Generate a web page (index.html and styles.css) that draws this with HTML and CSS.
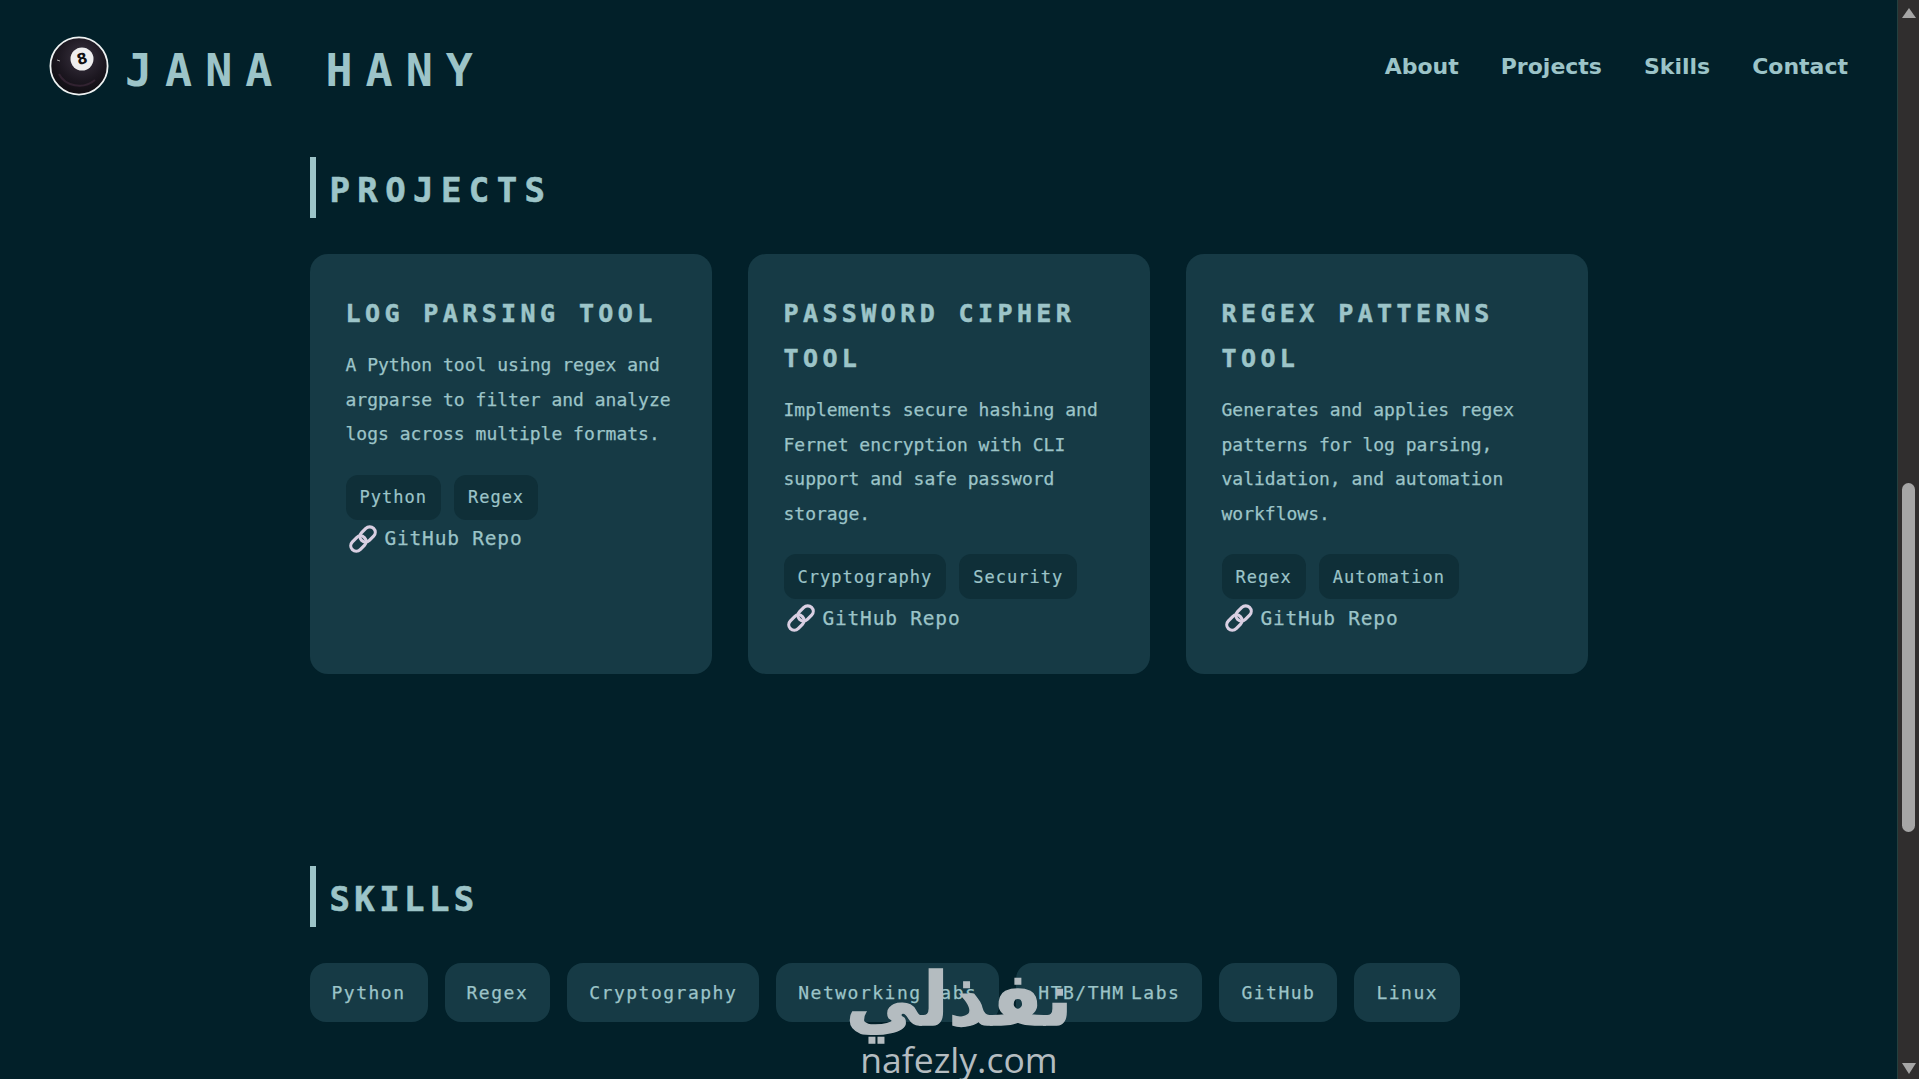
FILE: index.html
```html
<!DOCTYPE html>
<html lang="en">
<head>
<meta charset="utf-8">
<title>Jana Hany</title>
<link rel="stylesheet" href="styles.css">
</head>
<body>
<div class="page">
  <div class="viewport">
    <header class="site-header">
      <a class="brand">
        <svg class="ball" viewBox="0 0 60 60" aria-hidden="true">
          <defs>
            <radialGradient id="ballFill" cx="0.55" cy="0.35" r="0.75">
              <stop offset="0" stop-color="#3a3340"/>
              <stop offset="0.55" stop-color="#1c1720"/>
              <stop offset="1" stop-color="#0a090c"/>
            </radialGradient>
          </defs>
          <circle cx="30" cy="30" r="28.6" fill="url(#ballFill)" stroke="#eef2f2" stroke-width="1.8"/>
          <path d="M10 38 C16 50 34 54 46 44" fill="none" stroke="#3d2a3a" stroke-width="2" opacity=".7"/>
          <path d="M8 24 l3 1" stroke="#aaa" stroke-width="1"/>
          <circle cx="33" cy="23" r="11.5" fill="#eeeeee"/>
          <text x="33" y="28" class="ball-eight" transform="rotate(-14 33 23)">8</text>
        </svg>
        <span class="brand-name">JANA HANY</span>
      </a>
      <nav class="nav">
        <a>About</a>
        <a>Projects</a>
        <a>Skills</a>
        <a>Contact</a>
      </nav>
    </header>

    <main class="content">
      <section class="section">
        <h2 class="section-title">PROJECTS</h2>
        <div class="cards">
          <article class="card">
            <h3 class="card-title">LOG PARSING TOOL</h3>
            <p class="card-desc">A Python tool using regex and argparse to filter and analyze logs across multiple formats.</p>
            <div class="tags"><span class="tag">Python</span><span class="tag">Regex</span></div>
            <a class="repo">
              <svg class="chain" viewBox="0 0 26 26" aria-hidden="true"><g transform="rotate(45 13 13)" fill="none" stroke="#d9cfe2" stroke-width="3.2"><rect x="7.5" y="-2" width="11" height="17" rx="5.5"/><rect x="7.5" y="11" width="11" height="17" rx="5.5"/></g></svg>
              <span>GitHub Repo</span>
            </a>
          </article>
          <article class="card">
            <h3 class="card-title">PASSWORD CIPHER TOOL</h3>
            <p class="card-desc">Implements secure hashing and Fernet encryption with CLI support and safe password storage.</p>
            <div class="tags"><span class="tag">Cryptography</span><span class="tag">Security</span></div>
            <a class="repo">
              <svg class="chain" viewBox="0 0 26 26" aria-hidden="true"><g transform="rotate(45 13 13)" fill="none" stroke="#d9cfe2" stroke-width="3.2"><rect x="7.5" y="-2" width="11" height="17" rx="5.5"/><rect x="7.5" y="11" width="11" height="17" rx="5.5"/></g></svg>
              <span>GitHub Repo</span>
            </a>
          </article>
          <article class="card">
            <h3 class="card-title">REGEX PATTERNS TOOL</h3>
            <p class="card-desc">Generates and applies regex patterns for log parsing, validation, and automation workflows.</p>
            <div class="tags"><span class="tag">Regex</span><span class="tag">Automation</span></div>
            <a class="repo">
              <svg class="chain" viewBox="0 0 26 26" aria-hidden="true"><g transform="rotate(45 13 13)" fill="none" stroke="#d9cfe2" stroke-width="3.2"><rect x="7.5" y="-2" width="11" height="17" rx="5.5"/><rect x="7.5" y="11" width="11" height="17" rx="5.5"/></g></svg>
              <span>GitHub Repo</span>
            </a>
          </article>
        </div>
      </section>

      <section class="section section-skills">
        <h2 class="section-title section-title-short">SKILLS</h2>
        <div class="skills">
          <span class="skill">Python</span>
          <span class="skill">Regex</span>
          <span class="skill">Cryptography</span>
          <span class="skill">Networking Labs</span>
          <span class="skill">HTB/THM Labs</span>
          <span class="skill">GitHub</span>
          <span class="skill">Linux</span>
        </div>
      </section>
    </main>
  </div>

  <div class="scrollbar" aria-hidden="true">
    <span class="arrow arrow-up"></span>
    <div class="track"><span class="thumb"></span></div>
    <span class="arrow arrow-down"></span>
  </div>

  <div class="watermark">
    <span class="watermark-ar" lang="ar" dir="rtl">نفذلي</span>
    <span class="watermark-en">nafezly.com</span>
  </div>
</div>
</body>
</html>
```

FILE: styles.css
```css
* { box-sizing: border-box; }

html, body {
  margin: 0;
  height: 100%;
  overflow: hidden;
  background: #022029;
}

body {
  font-family: "DejaVu Sans Mono", monospace;
  color: #9cc4c8;
}

.page {
  position: relative;
  display: flex;
  height: 1079px;
}

.viewport {
  flex: 1;
  min-width: 0;
  overflow: hidden;
}

.site-header {
  display: flex;
  align-items: center;
  justify-content: space-between;
  height: 132px;
  padding: 0 49px;
}

.brand {
  display: flex;
  align-items: center;
  gap: 16px;
}

.ball {
  width: 60px;
  height: 60px;
  display: block;
}

.ball-eight {
  font-family: "DejaVu Sans", sans-serif;
  font-weight: 700;
  font-size: 15px;
  text-anchor: middle;
  fill: #111;
}

.brand-name {
  font-weight: 700;
  font-size: 45px;
  letter-spacing: 13px;
  line-height: 60px;
  padding-top: 10px;
  color: #9cc4c8;
}

.nav {
  display: flex;
  gap: 42px;
  font-family: "DejaVu Sans", sans-serif;
  font-weight: 700;
  font-size: 22px;
  color: #9cc4c8;
}

.content {
  width: 1278px;
  margin: 25px auto 0;
}

.section-skills {
  margin-top: 192px;
}

.section-title {
  margin: 0 0 36px;
  height: 61px;
  border-left: 6px solid #9cc4c8;
  padding-left: 14px;
  font-weight: 700;
  font-size: 34px;
  line-height: 67px;
  letter-spacing: 7.4px;
  -webkit-text-stroke: .6px #9cc4c8;
  color: #9cc4c8;
}

.section-title-short {
  letter-spacing: 4.4px;
}

.cards {
  display: grid;
  grid-template-columns: repeat(3, 402px);
  gap: 36px;
}

.card {
  background: #163a45;
  border-radius: 18px;
  padding: 37px 36px;
}

.card-title {
  margin: 0 0 12px;
  font-weight: 700;
  font-size: 25px;
  line-height: 45px;
  letter-spacing: 4.4px;
  -webkit-text-stroke: .5px #9cc4c8;
  color: #9cc4c8;
}

.card-desc {
  margin: 0 0 23px;
  font-size: 18px;
  line-height: 34.5px;
  -webkit-text-stroke: .25px #9cc4c8;
  color: #9cc4c8;
}

.tags {
  display: flex;
  gap: 13px;
}

.tag {
  display: flex;
  align-items: center;
  height: 45px;
  padding: 0 14px;
  border-radius: 12px;
  background: #0f2f38;
  font-size: 17px;
  letter-spacing: 1px;
  -webkit-text-stroke: .2px #9cc4c8;
  color: #9cc4c8;
}

.repo {
  display: flex;
  align-items: center;
  gap: 9px;
  height: 38px;
  padding-left: 4px;
  font-size: 19.5px;
  letter-spacing: .8px;
  -webkit-text-stroke: .25px #9cc4c8;
  color: #9cc4c8;
}

.chain {
  width: 26px;
  height: 26px;
  flex: none;
  overflow: visible;
}

.skills {
  display: flex;
  gap: 17px;
}

.skill {
  display: flex;
  align-items: center;
  height: 59px;
  padding: 0 22px;
  border-radius: 16px;
  background: #163a45;
  font-size: 18px;
  letter-spacing: 1.5px;
  word-spacing: -6px;
  -webkit-text-stroke: .25px #9cc4c8;
  color: #9cc4c8;
}

.scrollbar {
  flex: none;
  width: 22px;
  height: 100%;
  display: flex;
  flex-direction: column;
  align-items: center;
  background: #302e2e;
  border-left: 1px solid #24403f;
}

.arrow {
  flex: none;
  width: 0;
  height: 0;
  border-left: 7px solid transparent;
  border-right: 7px solid transparent;
}

.arrow-up {
  margin-top: 8px;
  border-bottom: 10px solid #a6a6a6;
}

.arrow-down {
  margin-bottom: 5px;
  border-top: 11px solid #a6a6a6;
}

.track {
  flex: 1;
  width: 100%;
  padding-top: 465px;
  display: flex;
  justify-content: center;
}

.thumb {
  display: block;
  width: 13px;
  height: 349px;
  border-radius: 7px;
  background: #a6a6a6;
}

.watermark {
  position: absolute;
  left: 843px;
  top: 957px;
  width: 232px;
  display: flex;
  flex-direction: column;
  align-items: center;
  color: #b4bcc0;
  pointer-events: none;
}

.watermark-ar {
  font-family: "DejaVu Sans", sans-serif;
  font-weight: 700;
  font-size: 74px;
  line-height: 84px;
  -webkit-text-stroke: 1.5px #b4bcc0;
}

.watermark-en {
  font-family: "Open Sans", sans-serif;
  font-weight: 500;
  font-size: 35.5px;
  line-height: 36px;
}
```
